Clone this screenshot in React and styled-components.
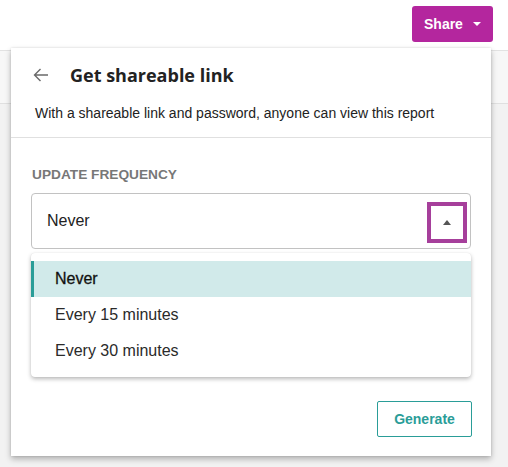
import React from "react";
import styled, { createGlobalStyle } from "styled-components";

const GlobalStyle = createGlobalStyle`
  html, body { margin: 0; padding: 0; background: #f2f2f2; }
  * { box-sizing: border-box; }
`;

const Page = styled.div`
  position: relative;
  width: 508px;
  height: 467px;
  overflow: hidden;
  background: #f2f2f2;
  font-family: "Liberation Sans", Arial, sans-serif;
`;

const TopBar = styled.div`
  height: 51px;
  background: #fff;
  border-bottom: 1px solid #e2e2e2;
  display: flex;
  justify-content: flex-end;
  align-items: flex-start;
  padding: 6px 15px 0 0;
`;

const SubBar = styled.div`
  height: 53px;
  background: #f7f7f7;
  border-bottom: 1px solid #e0e0e0;
`;

const ShareButton = styled.button`
  width: 81px;
  height: 36px;
  border: none;
  border-radius: 3px;
  background: #b4269e;
  color: #fff;
  font-family: "Liberation Sans", Arial, sans-serif;
  font-weight: bold;
  font-size: 14px;
  display: flex;
  align-items: center;
  padding: 0 0 0 12px;
  gap: 10px;
`;

const Caret = styled.span`
  width: 0;
  height: 0;
  border-left: 4px solid transparent;
  border-right: 4px solid transparent;
  ${(p) => (p.$up ? `border-bottom: 5px solid ${p.$color};` : `border-top: 4px solid ${p.$color};`)}
`;

const Panel = styled.div`
  position: absolute;
  left: 11px;
  top: 48px;
  width: 480px;
  height: 408px;
  background: #fff;
  box-shadow: 0 3px 6px rgba(0, 0, 0, 0.28), 0 0 2px rgba(0, 0, 0, 0.12);
  display: flex;
  flex-direction: column;
`;

const Header = styled.div`
  padding: 17px 20px 0 22px;
  border-bottom: 1px solid #e0e0e0;
  height: 90px;
`;

const TitleRow = styled.div`
  display: flex;
  align-items: center;
  height: 20px;
  gap: 21px;
`;

const Title = styled.h2`
  margin: 0;
  font-family: "Open Sans", sans-serif;
  font-weight: 700;
  font-size: 18px;
  color: #222;
  line-height: 20px;
`;

const Description = styled.p`
  margin: 20px 0 0 2px;
  font-size: 14px;
  color: #222;
  line-height: 16px;
`;

const Body = styled.div`
  flex: 1;
  padding: 28px 20px 19px 20px;
  display: flex;
  flex-direction: column;
`;

const Label = styled.div`
  font-size: 13.7px;
  font-weight: bold;
  color: #777;
  line-height: 16px;
  padding-left: 1px;
  margin-top: 1px;
`;

const SelectWrap = styled.div`
  position: relative;
  margin-top: 10px;
`;

const Select = styled.div`
  height: 56px;
  border: 1px solid #c2c2c2;
  border-radius: 4px;
  display: flex;
  align-items: center;
  padding: 0 3px 0 15px;
  font-size: 16px;
  color: #222;
`;

const SelectValue = styled.span`
  flex: 1;
`;

const CaretBox = styled.span`
  width: 40px;
  height: 41px;
  border: 4px solid #a63f9b;
  display: flex;
  align-items: center;
  justify-content: center;
  margin-top: 2px;
`;

const Menu = styled.ul`
  position: absolute;
  left: 0;
  right: 0;
  top: calc(100% + 4px);
  margin: 0;
  padding: 8px 0;
  list-style: none;
  background: #fff;
  border-radius: 4px;
  box-shadow: 0 2px 4px rgba(0, 0, 0, 0.28), 0 0 1px rgba(0, 0, 0, 0.1);
  z-index: 2;
`;

const MenuItem = styled.li`
  height: 36px;
  display: flex;
  align-items: center;
  font-size: 16px;
  padding-left: ${(p) => (p.$selected ? "21px" : "24px")};
  border-left: ${(p) => (p.$selected ? "3px solid #2a9d98" : "none")};
  background: ${(p) => (p.$selected ? "#d1eaea" : "transparent")};
  color: ${(p) => (p.$selected ? "#111" : "#2a2a2a")};
  -webkit-text-stroke: ${(p) => (p.$selected ? "0.3px #111" : "0")};
`;

const Footer = styled.div`
  margin-top: auto;
  display: flex;
  justify-content: flex-end;
`;

const GenerateButton = styled.button`
  width: 95px;
  height: 36px;
  background: #fff;
  border: 1px solid #2a9d98;
  border-radius: 2px;
  color: #2a9d98;
  font-family: "Liberation Sans", Arial, sans-serif;
  font-weight: bold;
  font-size: 14px;
  margin-right: -1px;
`;

const BackArrow = () => (
  <svg width="16" height="14" viewBox="0 0 16 14" fill="none">
    <path d="M15 7H1.5M7.5 1L1.5 7l6 6" stroke="#6a6a6a" strokeWidth="1.4" />
  </svg>
);

const options = ["Never", "Every 15 minutes", "Every 30 minutes"];

export default function App() {
  return (
    <>
      <GlobalStyle />
      <Page>
        <TopBar>
          <ShareButton>
            Share
            <Caret $color="#fff" />
          </ShareButton>
        </TopBar>
        <SubBar />
        <Panel>
          <Header>
            <TitleRow>
              <BackArrow />
              <Title>Get shareable link</Title>
            </TitleRow>
            <Description>
              With a shareable link and password, anyone can view this report
            </Description>
          </Header>
          <Body>
            <Label>UPDATE FREQUENCY</Label>
            <SelectWrap>
              <Select>
                <SelectValue>Never</SelectValue>
                <CaretBox>
                  <Caret $up $color="#555" />
                </CaretBox>
              </Select>
              <Menu>
                {options.map((o, i) => (
                  <MenuItem key={o} $selected={i === 0}>
                    {o}
                  </MenuItem>
                ))}
              </Menu>
            </SelectWrap>
            <Footer>
              <GenerateButton>Generate</GenerateButton>
            </Footer>
          </Body>
        </Panel>
      </Page>
    </>
  );
}
